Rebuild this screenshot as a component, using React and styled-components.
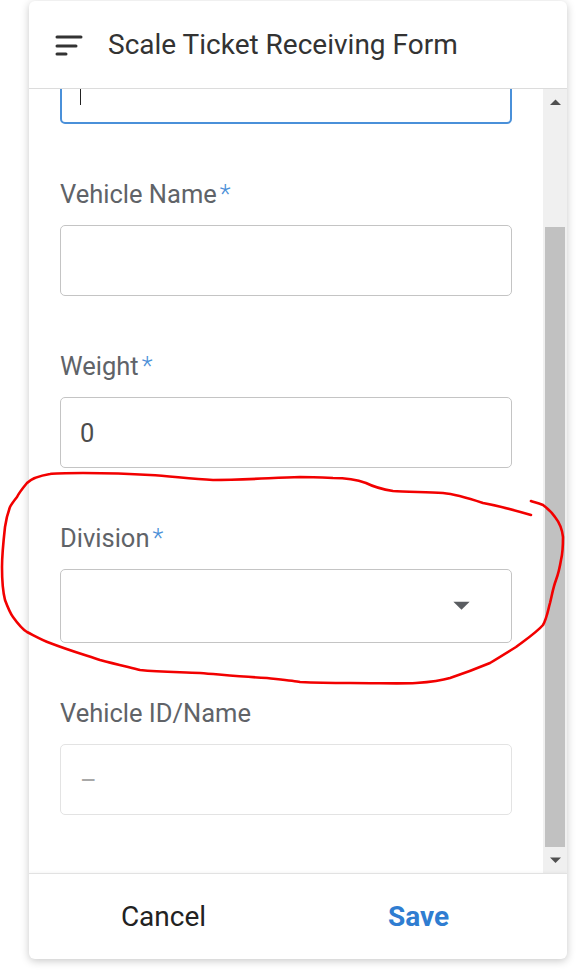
import React, { useLayoutEffect, useRef } from "react";
import styled, { createGlobalStyle } from "styled-components";

const GlobalStyle = createGlobalStyle`
  html, body {
    margin: 0;
    padding: 0;
    background: #fff;
    font-family: Roboto, "Liberation Sans", Arial, sans-serif;
  }
  * {
    box-sizing: border-box;
  }
`;

const Page = styled.div`
  position: relative;
  width: 583px;
  height: 973px;
  padding: 1px 16px 14px 29px;
`;

const Card = styled.div`
  height: 958px;
  display: flex;
  flex-direction: column;
  background: #fff;
  border-radius: 6px;
  box-shadow: 0 2px 9px rgba(0, 0, 0, 0.22);
  overflow: hidden;
`;

const Header = styled.div`
  height: 88px;
  flex-shrink: 0;
  display: flex;
  align-items: center;
  gap: 25px;
  padding-left: 26px;
  border-bottom: 1px solid #dcdcdc;
`;

const Title = styled.h1`
  margin: 0;
  font-size: 28px;
  line-height: 36px;
  font-weight: 400;
  color: #333;
`;

const Body = styled.div`
  flex: 1;
  min-height: 0;
  display: flex;
`;

const ScrollArea = styled.div`
  flex: 1;
  overflow: hidden;
`;

const Form = styled.div`
  display: flex;
  flex-direction: column;
  gap: 55px;
  padding: 55px 31px 58px;
`;

const Field = styled.div`
  display: flex;
  flex-direction: column;
`;

const Label = styled.label`
  height: 30px;
  line-height: 30px;
  margin-bottom: 16px;
  font-size: 25.5px;
  color: #606368;
  white-space: nowrap;
`;

const Required = styled.span`
  color: #4a8fd8;
  font-weight: 300;
  margin-left: 3px;
`;

const InputWrap = styled.div`
  position: relative;
`;

const Input = styled.input`
  display: block;
  width: 100%;
  height: 71px;
  padding: 0 19px;
  font-family: inherit;
  font-size: 25.5px;
  color: ${(p) => (p.disabled ? "#9a9a9a" : "#4d4d4d")};
  background: #fff;
  border: ${(p) => (p.$focused ? "2.5px solid #4a90d9" : `1px solid ${p.disabled ? "#e3e3e3" : "#c4c4c4"}`)};
  border-radius: 5px;
  outline: none;

  &::placeholder {
    color: #a8a8a8;
  }
`;

const Caret = styled.span`
  position: absolute;
  left: 20px;
  bottom: 19px;
  width: 1px;
  height: 28px;
  background: #222;
`;

const Select = styled.div`
  height: 74px;
  display: flex;
  align-items: center;
  justify-content: flex-end;
  padding-right: 41px;
  border: 1px solid #c4c4c4;
  border-radius: 5px;
`;

const ScrollBar = styled.div`
  width: 24px;
  flex-shrink: 0;
  display: flex;
  flex-direction: column;
  background: #f0f0f0;
`;

const ScrollButton = styled.div`
  height: 26px;
  display: flex;
  align-items: center;
  justify-content: center;
`;

const Track = styled.div`
  flex: 1;
  display: flex;
  flex-direction: column;
  justify-content: flex-end;
  padding: 0 2px;
`;

const Thumb = styled.div`
  height: 620px;
  background: #c1c1c1;
`;

const Footer = styled.div`
  height: 86px;
  flex-shrink: 0;
  display: grid;
  grid-template-columns: 1fr 1fr;
  padding: 0 21px 0 7px;
  border-top: 1px solid #e2e2e2;
  box-shadow: 0 -1px 3px rgba(0, 0, 0, 0.04);
`;

const FooterButton = styled.button`
  border: none;
  background: none;
  font-family: inherit;
  font-size: 28px;
  font-weight: ${(p) => (p.$primary ? 700 : 400)};
  color: ${(p) => (p.$primary ? "#2f7dd1" : "#222")};
  cursor: pointer;
`;

const Annotation = styled.svg`
  position: absolute;
  left: 0;
  top: 0;
  pointer-events: none;
`;

const MenuIcon = () => (
  <svg width="28" height="22" viewBox="0 0 28 22">
    <g stroke="#333" strokeWidth="3" strokeLinecap="round">
      <line x1="2" y1="3" x2="26" y2="3" />
      <line x1="2" y1="12" x2="21" y2="12" />
      <line x1="2" y1="20" x2="11" y2="20" />
    </g>
  </svg>
);

const Triangle = ({ up, size = 11, color = "#505050" }) => (
  <svg width={size} height={size / 2 + 1} viewBox="0 0 12 7">
    <path d={up ? "M0 6.5 L6 0.5 L12 6.5 Z" : "M0 0.5 L6 6.5 L12 0.5 Z"} fill={color} />
  </svg>
);

const fields = [
  { label: "Vehicle Name", required: true },
  { label: "Weight", required: true, value: "0" },
];

const App = () => {
  const scrollRef = useRef(null);

  // the form is shown scrolled all the way down
  useLayoutEffect(() => {
    const el = scrollRef.current;
    if (el) el.scrollTop = el.scrollHeight;
  }, []);

  return (
    <Page>
      <GlobalStyle />
      <Card>
        <Header>
          <MenuIcon />
          <Title>Scale Ticket Receiving Form</Title>
        </Header>
        <Body>
          <ScrollArea ref={scrollRef}>
            <Form>
              <Field>
                <InputWrap>
                  <Input $focused readOnly value="" />
                  <Caret />
                </InputWrap>
              </Field>
              {fields.map((f) => (
                <Field key={f.label}>
                  <Label>
                    {f.label}
                    {f.required && <Required>*</Required>}
                  </Label>
                  <Input readOnly value={f.value || ""} />
                </Field>
              ))}
              <Field>
                <Label>
                  Division<Required>*</Required>
                </Label>
                <Select>
                  <Triangle size={17} color="#5a5d61" />
                </Select>
              </Field>
              <Field>
                <Label>Vehicle ID/Name</Label>
                <Input disabled placeholder="–" />
              </Field>
            </Form>
          </ScrollArea>
          <ScrollBar>
            <ScrollButton>
              <Triangle up />
            </ScrollButton>
            <Track>
              <Thumb />
            </Track>
            <ScrollButton>
              <Triangle />
            </ScrollButton>
          </ScrollBar>
        </Body>
        <Footer>
          <FooterButton>Cancel</FooterButton>
          <FooterButton $primary>Save</FooterButton>
        </Footer>
      </Card>
      <Annotation width="583" height="973" viewBox="0 0 583 973">
        <path
          d="M531 515 C510 509 495 505 483 503 C465 497 455 494 443 493 C425 492 405 492 393 491 C380 489 372 486 366 483 C355 479 345 478 333 478 C310 477 300 477 300 477 C270 478 240 480 213 480 C190 479 170 476 150 475 C120 473 100 473 83 473 C65 473 55 473 50 474 C38 476 30 480 27 483 C22 489 19 493 17 497 C13 502 11 505 10 507 C7 515 6 520 5 527 C3 545 2 555 2 567 C2 580 3 592 5 600 C8 608 10 613 13 617 C18 624 22 629 27 632 C35 636 42 640 50 643 C68 650 85 655 100 660 C115 664 128 667 140 670 C160 672 180 672 200 673 C225 675 245 677 267 678 C285 680 295 681 300 682 C320 683 335 683 350 683 C380 683 400 684 416 683 C430 682 440 681 450 678 C465 673 478 668 490 663 C500 657 508 652 516 647 C528 638 537 632 543 625 C547 618 548 610 550 603 C552 595 553 588 556 580 C559 572 560 566 561 560 C563 552 563 545 563 537 C562 528 559 522 555 517 C551 511 547 508 543 505 C538 503 534 502 531 501"
          fill="none"
          stroke="#f20000"
          strokeWidth="2.6"
          strokeLinecap="round"
          strokeLinejoin="round"
        />
      </Annotation>
    </Page>
  );
};

export default App;
